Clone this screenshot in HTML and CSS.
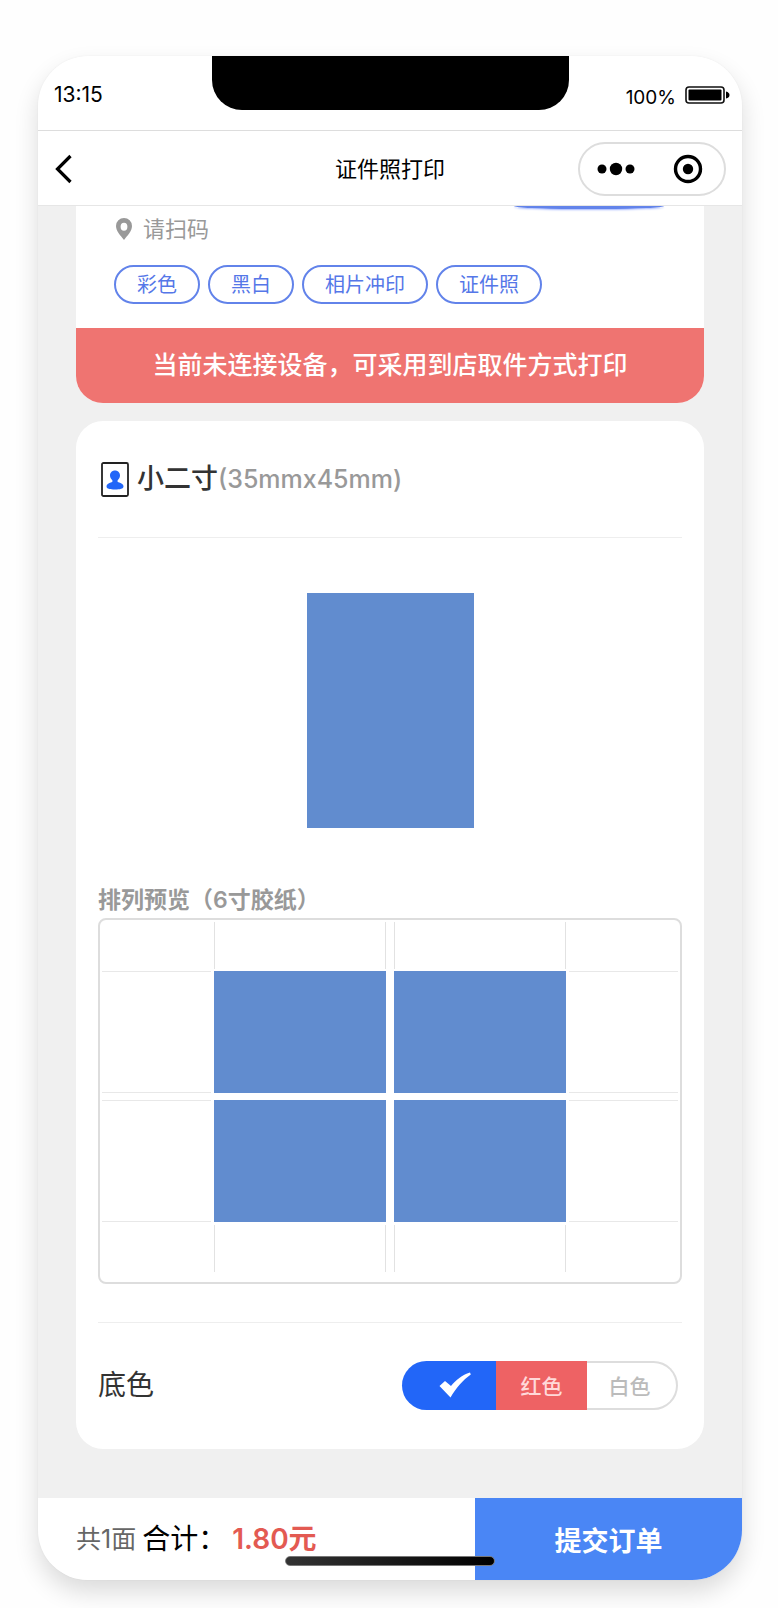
FILE: index.html
```html
<!DOCTYPE html>
<html lang="zh-CN">
<head>
<meta charset="utf-8">
<meta name="viewport" content="width=device-width, initial-scale=1">
<title>证件照打印</title>
<link rel="stylesheet" href="styles.css">
</head>
<body>
<div class="phone">
  <div class="status">
    <span class="time">13:15</span>
    <div class="notch"></div>
    <div class="power">
      <span>100%</span>
      <svg width="45" height="18" viewBox="0 0 45 18" aria-hidden="true">
        <rect x="1" y="1" width="38" height="16" rx="3" fill="none" stroke="#111" stroke-width="1.600"/>
        <rect x="3.500" y="3.500" width="33" height="11" rx="1"/>
        <path d="M41 5.500q3.500 1 3.500 3.500T41 12.500z"/>
      </svg>
    </div>
  </div>

  <header class="nav">
    <button class="back" type="button" aria-label="返回">
      <svg width="20" height="30" viewBox="0 0 20 30" aria-hidden="true"><path d="M16.500 2L3.500 15l13 13" fill="none" stroke="#000" stroke-width="3.200"/></svg>
    </button>
    <h1 class="nav-title">证件照打印</h1>
    <div class="capsule">
      <button type="button" aria-label="更多">
        <svg width="38" height="14" viewBox="0 0 38 14" aria-hidden="true"><circle cx="5" cy="7" r="4.500"/><circle cx="19" cy="7" r="6.200"/><circle cx="33" cy="7" r="4.500"/></svg>
      </button>
      <button type="button" aria-label="关闭">
        <svg width="30" height="30" viewBox="0 0 30 30" aria-hidden="true"><circle cx="15" cy="15" r="12.500" fill="none" stroke="#000" stroke-width="3.400"/><circle cx="15" cy="15" r="5.200"/></svg>
      </button>
    </div>
  </header>

  <main class="content">
    <section class="device">
      <div class="scan-edge"></div>
      <div class="device-body">
        <p class="place">
          <svg width="16" height="22" viewBox="0 0 16 22" aria-hidden="true"><path fill="#999" fill-rule="evenodd" d="M8 0a8 8 0 0 1 8 8c0 5-4.500 9.500-8 14C4.500 17.500 0 13 0 8a8 8 0 0 1 8-8zm0 4.800a3.400 4 0 1 0 0 8 3.400 4 0 0 0 0-8z"/></svg>
          请扫码
        </p>
        <ul class="tags">
          <li>彩色</li><li>黑白</li><li>相片冲印</li><li>证件照</li>
        </ul>
      </div>
      <p class="notice">当前未连接设备，可采用到店取件方式打印</p>
    </section>

    <section class="card">
      <h2 class="size">
        <svg width="28" height="35" viewBox="0 0 28 35" aria-hidden="true">
          <rect x="1" y="1" width="26" height="33" rx="1.500" fill="#fff" stroke="#222" stroke-width="1.800"/>
          <path fill="#2266f8" d="M14 8.500c3 0 5 2.200 5 5 0 2.300-1.200 3.600-2.300 4.800-.5.900-.1 1.600.8 2 3.200.9 5 2.200 5 4.200 0 2.300-3.500 3-8.500 3s-8.500-.7-8.500-3c0-2 1.800-3.300 5-4.200.9-.4 1.300-1.100.8-2C10.200 17.100 9 15.800 9 13.500c0-2.800 2-5 5-5z"/>
        </svg>
        <span>小二寸<span class="dim">(35mmx45mm)</span></span>
      </h2>

      <div class="preview"><div class="photo"></div></div>

      <h3 class="caption">排列预览（6寸胶纸）</h3>
      <div class="sheet">
        <i class="v c2 r1"></i><i class="v c4 r1"></i>
        <i class="h c1 r2"></i><b class="c2 r2"></b><b class="c4 r2"></b><i class="h c5 r2"></i>
        <i class="h c1 r4"></i><b class="c2 r4"></b><b class="c4 r4"></b><i class="h c5 r4"></i>
        <i class="v c2 r5"></i><i class="v c4 r5"></i>
      </div>

      <fieldset class="backdrop">
        <legend class="hidden">底色</legend>
        <span class="backdrop-label">底色</span>
        <div class="choices">
          <label class="choice blue"><input type="radio" name="bg" checked aria-label="蓝色">
            <svg width="32" height="26" viewBox="0 0 32 26" aria-hidden="true"><path fill="#fff" d="M.5 14L6 9l6 5C17 8 23 3 31 .5l.8 2C24 8 17 16 11.500 25.500z"/></svg>
          </label>
          <label class="choice red"><input type="radio" name="bg">红色</label>
          <label class="choice white"><input type="radio" name="bg">白色</label>
        </div>
      </fieldset>
    </section>
  </main>

  <footer class="order">
    <p class="total"><span class="pages">共1面</span><span>合计：</span><strong>1.80元</strong></p>
    <button class="submit" type="button">提交订单</button>
    <div class="home"></div>
  </footer>
</div>
</body>
</html>
```
FILE: styles.css
```css
* { box-sizing: border-box; }
body {
  margin: 0;
  padding: 56px 36px 29px 38px;
  background: #fefefe;
  color: #000;
  font-family: Inter, "Noto Sans CJK SC", sans-serif;
}
h1, h2, h3, p, ul { margin: 0; padding: 0; }
button { border: 0; padding: 0; background: none; font: inherit; color: inherit; }
svg { display: block; flex: none; }

.phone {
  overflow: hidden;
  border-radius: 50px;
  background: #f0f0f0;
  box-shadow: 0 12px 24px rgba(0, 0, 0, .14), 0 0 2px rgba(0, 0, 0, .05);
}

.status {
  display: grid;
  grid-template-columns: 1fr 357px 1fr;
  height: 75px;
  padding: 0 12px 0 16px;
  background: #fff;
  border-bottom: 1px solid #ddd;
  font-size: 21px;
  line-height: 24px;
}
.time { padding-top: 27px; }
.notch { height: 54px; background: #000; border-radius: 0 0 30px 30px; }
.status { padding: 0 12px; }
.time { padding-left: 4px; }
.power { display: flex; justify-content: flex-end; gap: 9px; padding-top: 30px; font-size: 19px; }

.nav {
  display: grid;
  grid-template-columns: 1fr auto 1fr;
  align-items: center;
  height: 75px;
  padding: 2px 16px 0;
  background: #fff;
  border-bottom: 1px solid #e6e6e6;
}
.back { justify-self: start; }
.nav-title { font-size: 22px; line-height: 32px; font-weight: 400; }
.capsule {
  justify-self: end;
  display: grid;
  grid-template-columns: 1fr 1fr;
  width: 148px;
  height: 54px;
  border: 2px solid #ddd;
  border-radius: 27px;
}
.capsule button { display: grid; place-items: center; }

.content { padding: 0 38px 49px; }
.device { overflow: hidden; background: #fff; border-radius: 0 0 27px 27px; }
.scan-edge {
  width: 150px;
  height: 3px;
  margin: 0 40px 0 auto;
  border-radius: 0 0 60px 60px / 0 0 3px 3px;
  background: #6283ea;
  box-shadow: 0 1px 2px #9fb3ff;
}
.device-body { padding: 4px 38px 24px; }
.place { display: flex; align-items: center; gap: 11px; padding-left: 2px; color: #999; font-size: 22px; line-height: 32px; }
.tags { display: flex; gap: 8px; margin-top: 20px; list-style: none; }
.tags li {
  padding: 1px 21px 0;
  border: 2px solid #6283ea;
  border-radius: 20px;
  color: #5577e8;
  font-size: 20px;
  line-height: 34px;
}
.notice { background: #ef7471; color: #fff; font-size: 25px; line-height: 75px; font-weight: 500; text-align: center; }

.card { margin-top: 18px; padding: 0 22px; background: #fff; border-radius: 27px; }
.size {
  display: flex;
  align-items: center;
  gap: 8px;
  height: 117px;
  padding-left: 3px;
  border-bottom: 1px solid #eee;
  color: #333;
  font-size: 27px;
  line-height: 40px;
  font-weight: 500;
}
.dim { color: #999; font-size: 25px; }
.preview { display: flex; justify-content: center; padding: 55px 0; }
.photo { width: 167px; height: 235px; background: #618ccf; }
.caption { color: #999; font-size: 23px; line-height: 35px; font-weight: 600; }

.sheet {
  display: grid;
  grid-template-columns: 1fr 172px 8px 172px 1fr;
  grid-template-rows: 50px 122px 7px 122px 50px;
  padding: 1px 2px 10px;
  border: 2px solid #ddd;
  border-radius: 8px;
}
.sheet b { background: #618ccf; }
.v { margin: 1px 0 2px; border: solid #e2e2e2; border-width: 0 1px; }
.v.r5 { margin: 3px 0 0; }
.h { border: solid #e8e8e8; border-width: 1px 0; }
.h.c1 { margin-right: 3px; }
.h.c5 { margin-left: 3px; }
.c1 { grid-column: 1; }
.c2 { grid-column: 2; }
.c4 { grid-column: 4; }
.c5 { grid-column: 5; }
.r1 { grid-row: 1; }
.r2 { grid-row: 2; }
.r4 { grid-row: 4; }
.r5 { grid-row: 5; }

.backdrop {
  display: flex;
  align-items: center;
  justify-content: space-between;
  height: 127px;
  margin: 38px 0 0;
  padding: 0 4px 2px 0;
  border: 0;
  border-top: 1px solid #eee;
}
.hidden, .choice input { position: absolute; width: 1px; height: 1px; margin: 0; padding: 0; opacity: 0; overflow: hidden; }
.backdrop-label { color: #333; font-size: 28px; line-height: 40px; }
.choices { display: flex; height: 49px; font-size: 21px; font-weight: 500; }
.choice { display: flex; align-items: center; justify-content: center; width: 91px; }
.blue { width: 94px; padding-left: 12px; border-radius: 25px 0 0 25px; background: #2266f8; }
.red { background: #ee6264; color: #ffd9d9; }
.white { padding-right: 4px; border: 2px solid #ddd; border-left: 0; border-radius: 0 25px 25px 0; color: #bbb; }

.order { position: relative; display: flex; height: 82px; background: #fff; }
.total { display: flex; flex: 1; align-items: center; gap: 6px; padding-left: 38px; font-size: 28px; line-height: 40px; white-space: nowrap; }
.pages { color: #666; font-size: 25px; }
.total strong { color: #e35a52; font-weight: 600; }
.submit { width: 267px; background: #4a86f5; color: #fff; font-size: 27px; font-weight: 700; }
.home {
  position: absolute;
  bottom: 14px;
  left: 50%;
  width: 210px;
  height: 10px;
  margin-left: -105px;
  border: 1px solid #777;
  border-radius: 5px;
  background: linear-gradient(90deg, #333, #000);
}
```
